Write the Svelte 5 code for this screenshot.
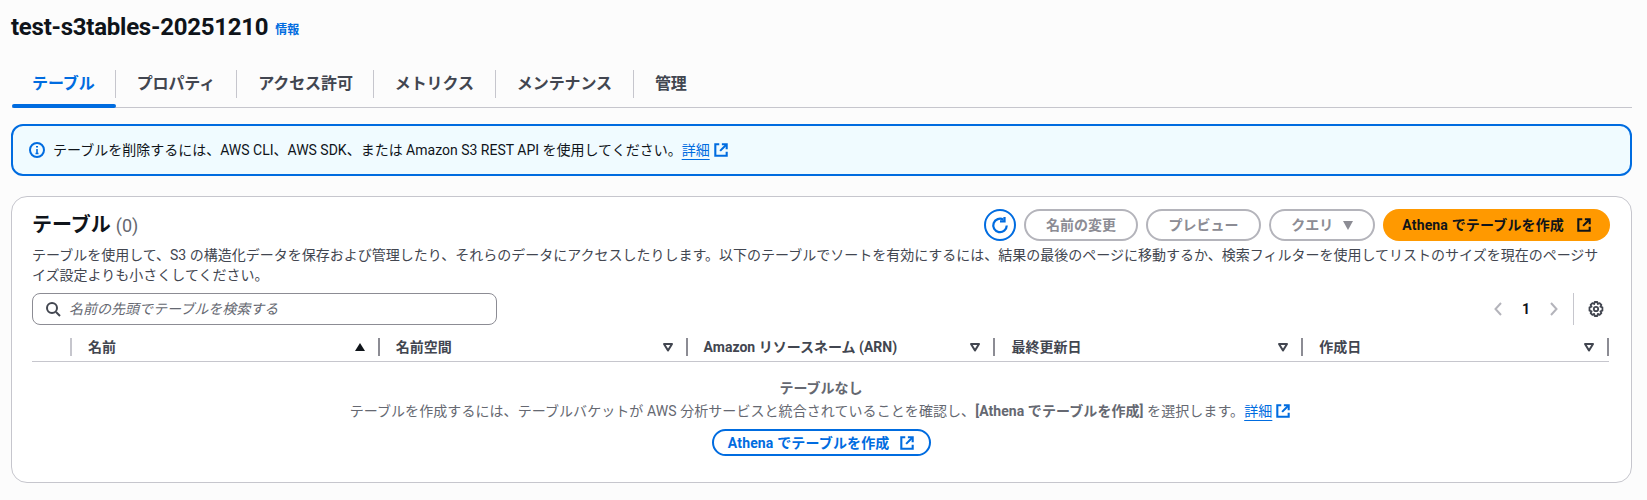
<script>
  const tabs = ['テーブル', 'プロパティ', 'アクセス許可', 'メトリクス', 'メンテナンス', '管理'];
  const cols = [
    { name: '名前', sorted: true },
    { name: '名前空間' },
    { name: 'Amazon リソースネーム (ARN)' },
    { name: '最終更新日' },
    { name: '作成日' }
  ];
</script>

{#snippet ext()}
  <svg class="ext" viewBox="0 0 16 16" fill="none" stroke="currentColor" stroke-width="2.400"><path d="M14.500 10v4.500H1.500V1.500H6"/><path d="M9 1.500h5.500V7"/><path d="M14 2 7 9"/></svg>
{/snippet}

<div class="page">
  <header class="title">
    <h1>test-s3tables-20251210</h1>
    <a class="info" href="#top">情報</a>
  </header>

  <nav class="tabs">
    {#each tabs as t, i}
      <div class="tab" class:active={i === 0}>{t}</div>
    {/each}
  </nav>

  <div class="alert">
    <svg class="ico" viewBox="0 0 16 16" fill="none" stroke="#006ce0" stroke-width="2"><circle cx="8" cy="8" r="7"/><path d="M8 11V7M6.500 11.500h3"  stroke-width="1.600"/><path d="M8 4v1.600"/></svg>
    <span>テーブルを削除するには、AWS CLI、AWS SDK、または Amazon S3 REST API を使用してください。</span>
    <a class="link" href="#top">詳細</a>
    {@render ext()}
  </div>

  <section class="card">
    <div class="head">
      <h2>テーブル <span class="count">(0)</span></h2>
      <div class="actions">
        <button class="round" aria-label="更新">
          <svg viewBox="0 0 16 16" fill="none" stroke="#006ce0" stroke-width="2"><path d="M11 3.200a6 6 0 1 0 3 5.300"/><path d="M12 .8v4H8"/></svg>
        </button>
        <button class="btn dis w1">名前の変更</button>
        <button class="btn dis w2">プレビュー</button>
        <button class="btn dis w3">クエリ <i class="caret"></i></button>
        <button class="btn primary">Athena でテーブルを作成 {@render ext()}</button>
      </div>
    </div>
    <p class="desc">テーブルを使用して、S3 の構造化データを保存および管理したり、それらのデータにアクセスしたりします。以下のテーブルでソートを有効にするには、結果の最後のページに移動するか、検索フィルターを使用してリストのサイズを現在のページサイズ設定よりも小さくしてください。</p>

    <div class="tools">
      <div class="search">
        <svg class="sico" viewBox="0 0 16 16" fill="none" stroke="#424650" stroke-width="2"><circle cx="7" cy="7" r="5"/><path d="m11 11 4 4"/></svg>
        <span>名前の先頭でテーブルを検索する</span>
      </div>
      <div class="pager">
        <svg class="chev" viewBox="0 0 16 16" fill="none" stroke="#b4b4bb" stroke-width="2"><path d="M10 2 4.500 8l5.500 6"/></svg>
        <b>1</b>
        <svg class="chev" viewBox="0 0 16 16" fill="none" stroke="#b4b4bb" stroke-width="2"><path d="M6 2l5.500 6L6 14"/></svg>
        <div class="gear">
          <svg viewBox="0 0 16 16" fill="none" stroke="#424650" stroke-width="1.800" stroke-linejoin="round"><circle cx="8" cy="8" r="2.200"/><path d="M6.700 1h2.600l.5 2 1.800-.9 1.800 1.800-1 1.800 2 .6v3.400l-2 .6 1 1.800-1.800 1.800-1.800-1-.5 2.100H6.700l-.5-2.100-1.800 1-1.800-1.800 1-1.800-2.100-.6V6.300l2.100-.6-1-1.800 1.800-1.800 1.800.9z"/></svg>
        </div>
      </div>
    </div>

    <div class="thead">
      <div class="sel"></div>
      {#each cols as c}
        <div class="th">
          <span>{c.name}</span>
          <svg class="sort" viewBox="0 0 12 10">
            {#if c.sorted}
              <path d="M6 1l5 8H1z" fill="#0f141a"/>
            {:else}
              <path d="M2 2h8L6 8.500z" fill="none" stroke="#424650" stroke-width="2" stroke-linejoin="round"/>
            {/if}
          </svg>
        </div>
      {/each}
    </div>

    <div class="empty">
      <div class="etitle">テーブルなし</div>
      <div class="etext">テーブルを作成するには、テーブルバケットが AWS 分析サービスと統合されていることを確認し、<b>[Athena でテーブルを作成]</b> を選択します。<a class="link" href="#top">詳細</a>{@render ext()}</div>
      <button class="btn normal">Athena でテーブルを作成 {@render ext()}</button>
    </div>
  </section>
</div>

<style>
  :global(body) {
    margin: 0;
    background: #fcfcfc;
  }
  .page {
    font-family: Roboto, "Noto Sans CJK JP", sans-serif;
    font-size: 14px;
    line-height: 20px;
    color: #0f141a;
    padding: 11px 15px 0 11px;
    height: 489px;
    overflow: hidden;
  }
  .title {
    display: flex;
    align-items: baseline;
    height: 32px;
    gap: 7px;
  }
  h1 {
    margin: 0;
    font-size: 24px;
    line-height: 32px;
    font-weight: 700;
    letter-spacing: -0.25px;
  }
  .info {
    font-size: 12px;
    font-weight: 700;
    color: #006ce0;
    text-decoration: none;
    position: relative;
    top: -1px;
  }
  .tabs {
    display: flex;
    margin-top: 17px;
    margin-left: 1px;
    height: 47px;
    border-bottom: 1px solid #c6c6cd;
  }
  .tab {
    font-size: 16px;
    font-weight: 700;
    line-height: 28px;
    height: 28px;
    margin-top: 10px;
    padding: 0 21px;
    letter-spacing: -0.1px;
    color: #424650;
    border-right: 1px solid #c6c6cd;
    position: relative;
  }
  .tab:nth-child(3) {
    padding-right: 20px;
  }
  .tab:last-child {
    border-right: 0;
  }
  .tab.active {
    color: #006ce0;
    padding: 0 20px 0 20px;
  }
  .tab.active::after {
    content: "";
    position: absolute;
    left: 0;
    right: -1px;
    top: 34px;
    height: 4px;
    border-radius: 2px;
    background: #006ce0;
  }
  .alert {
    display: flex;
    align-items: center;
    margin-top: 16px;
    height: 52px;
    box-sizing: border-box;
    border: 2px solid #006ce0;
    border-radius: 12px;
    background: #f0fbff;
    padding: 0 16px;
    color: #0f141a;
    font-size: 14px;
  }
  .ico {
    width: 16px;
    height: 16px;
    margin-right: 8px;
    flex: none;
  }
  .link {
    color: #006ce0;
    text-decoration: underline;
    text-underline-offset: 4px;
  }
  .ext {
    width: 14px;
    height: 14px;
    margin-left: 4px;
    vertical-align: -2px;
    color: #006ce0;
  }
  .card {
    margin-top: 20px;
    height: 287px;
    box-sizing: border-box;
    background: #fff;
    border: 1px solid #c6c6cd;
    border-radius: 16px;
    padding: 12px 21px 0 20px;
  }
  .head {
    display: flex;
    justify-content: space-between;
    align-items: center;
    height: 32px;
    margin-bottom: 4px;
  }
  h2 {
    margin: 0;
    font-size: 20px;
    font-weight: 700;
    line-height: 28px;
  }
  .count {
    font-weight: 400;
    font-size: 18px;
    color: #656871;
  }
  .actions {
    display: flex;
    gap: 8px;
    align-items: center;
  }
  button {
    font: inherit;
    font-weight: 700;
    box-sizing: border-box;
    height: 32px;
    border-radius: 16px;
    padding: 0;
    background: #fff;
    white-space: nowrap;
  }
  .round {
    width: 32px;
    border: 2px solid #006ce0;
    display: flex;
    align-items: center;
    justify-content: center;
  }
  .round svg {
    width: 18px;
    height: 18px;
  }
  .btn.dis {
    border: 2px solid #b4b4bb;
    color: #8c8c94;
  }
  .w1 { width: 114px; }
  .w2 { width: 115px; }
  .w3 { width: 106px; }
  .caret {
    display: inline-block;
    width: 0;
    height: 0;
    margin-left: 6px;
    border-left: 5px solid transparent;
    border-right: 5px solid transparent;
    border-top: 9px solid #8c8c94;
  }
  .btn.primary {
    width: 227px;
    border: 0;
    background: #ff9900;
    color: #0f141a;
    letter-spacing: 0.15px;
  }
  .btn.primary .ext {
    color: #0f141a;
    margin-left: 9px;
  }
  .desc {
    margin: 0;
    color: #424650;
    font-size: 14px;
    line-height: 20px;
  }
  .tools {
    display: flex;
    justify-content: space-between;
    align-items: center;
    margin-top: 8px;
    height: 32px;
  }
  .search {
    width: 465px;
    height: 32px;
    box-sizing: border-box;
    border: 1px solid #8c8c94;
    border-radius: 8px;
    display: flex;
    align-items: center;
    padding-left: 12px;
    gap: 8px;
    color: #656871;
    font-style: italic;
  }
  .sico {
    width: 16px;
    height: 16px;
  }
  .pager {
    display: flex;
    align-items: center;
    height: 32px;
    margin-right: 1px;
  }
  .chev {
    width: 16px;
    height: 16px;
  }
  .pager b {
    margin: 0 15px 0 15px;
    font-size: 14px;
  }
  .gear {
    margin-left: 12px;
    border-left: 1px solid #c6c6cd;
    height: 32px;
    width: 36px;
    box-sizing: border-box;
    padding-left: 14px;
    display: flex;
    align-items: center;
  }
  .gear svg {
    width: 16px;
    height: 16px;
  }
  .thead {
    display: grid;
    grid-template-columns: 38px repeat(5, 1fr);
    margin-top: 6px;
    margin-right: 1px;
    border-bottom: 1px solid #c6c6cd;
    align-items: start;
    padding-top: 7px;
    box-sizing: border-box;
    height: 31px;
  }
  .sel {
    height: 0;
  }
  .th {
    display: flex;
    justify-content: space-between;
    align-items: center;
    height: 18px;
    padding: 0 12px 0 16px;
    border-left: 2px solid #8c8c94;
    font-weight: 700;
    color: #424650;
    font-size: 14px;
  }
  .th:first-of-type {
    color: #0f141a;
  }
  .th:nth-child(2) {
    border-left-color: #c6c6cd;
  }
  .th:last-child {
    border-right: 2px solid #8c8c94;
  }
  .sort {
    width: 12px;
    height: 10px;
  }
  .empty {
    text-align: center;
    color: #656871;
    padding-top: 16px;
  }
  .etitle {
    font-weight: 700;
  }
  .etext {
    margin-top: 3px;
    letter-spacing: 0.07px;
    padding-right: 2px;
  }
  .etext b {
    font-weight: 700;
  }
  .btn.normal {
    margin-top: 8px;
    width: 219px;
    height: 27px;
    border: 2px solid #006ce0;
    color: #006ce0;
    letter-spacing: 0.15px;
  }
  .btn.normal .ext {
    margin-left: 7px;
  }
</style>
